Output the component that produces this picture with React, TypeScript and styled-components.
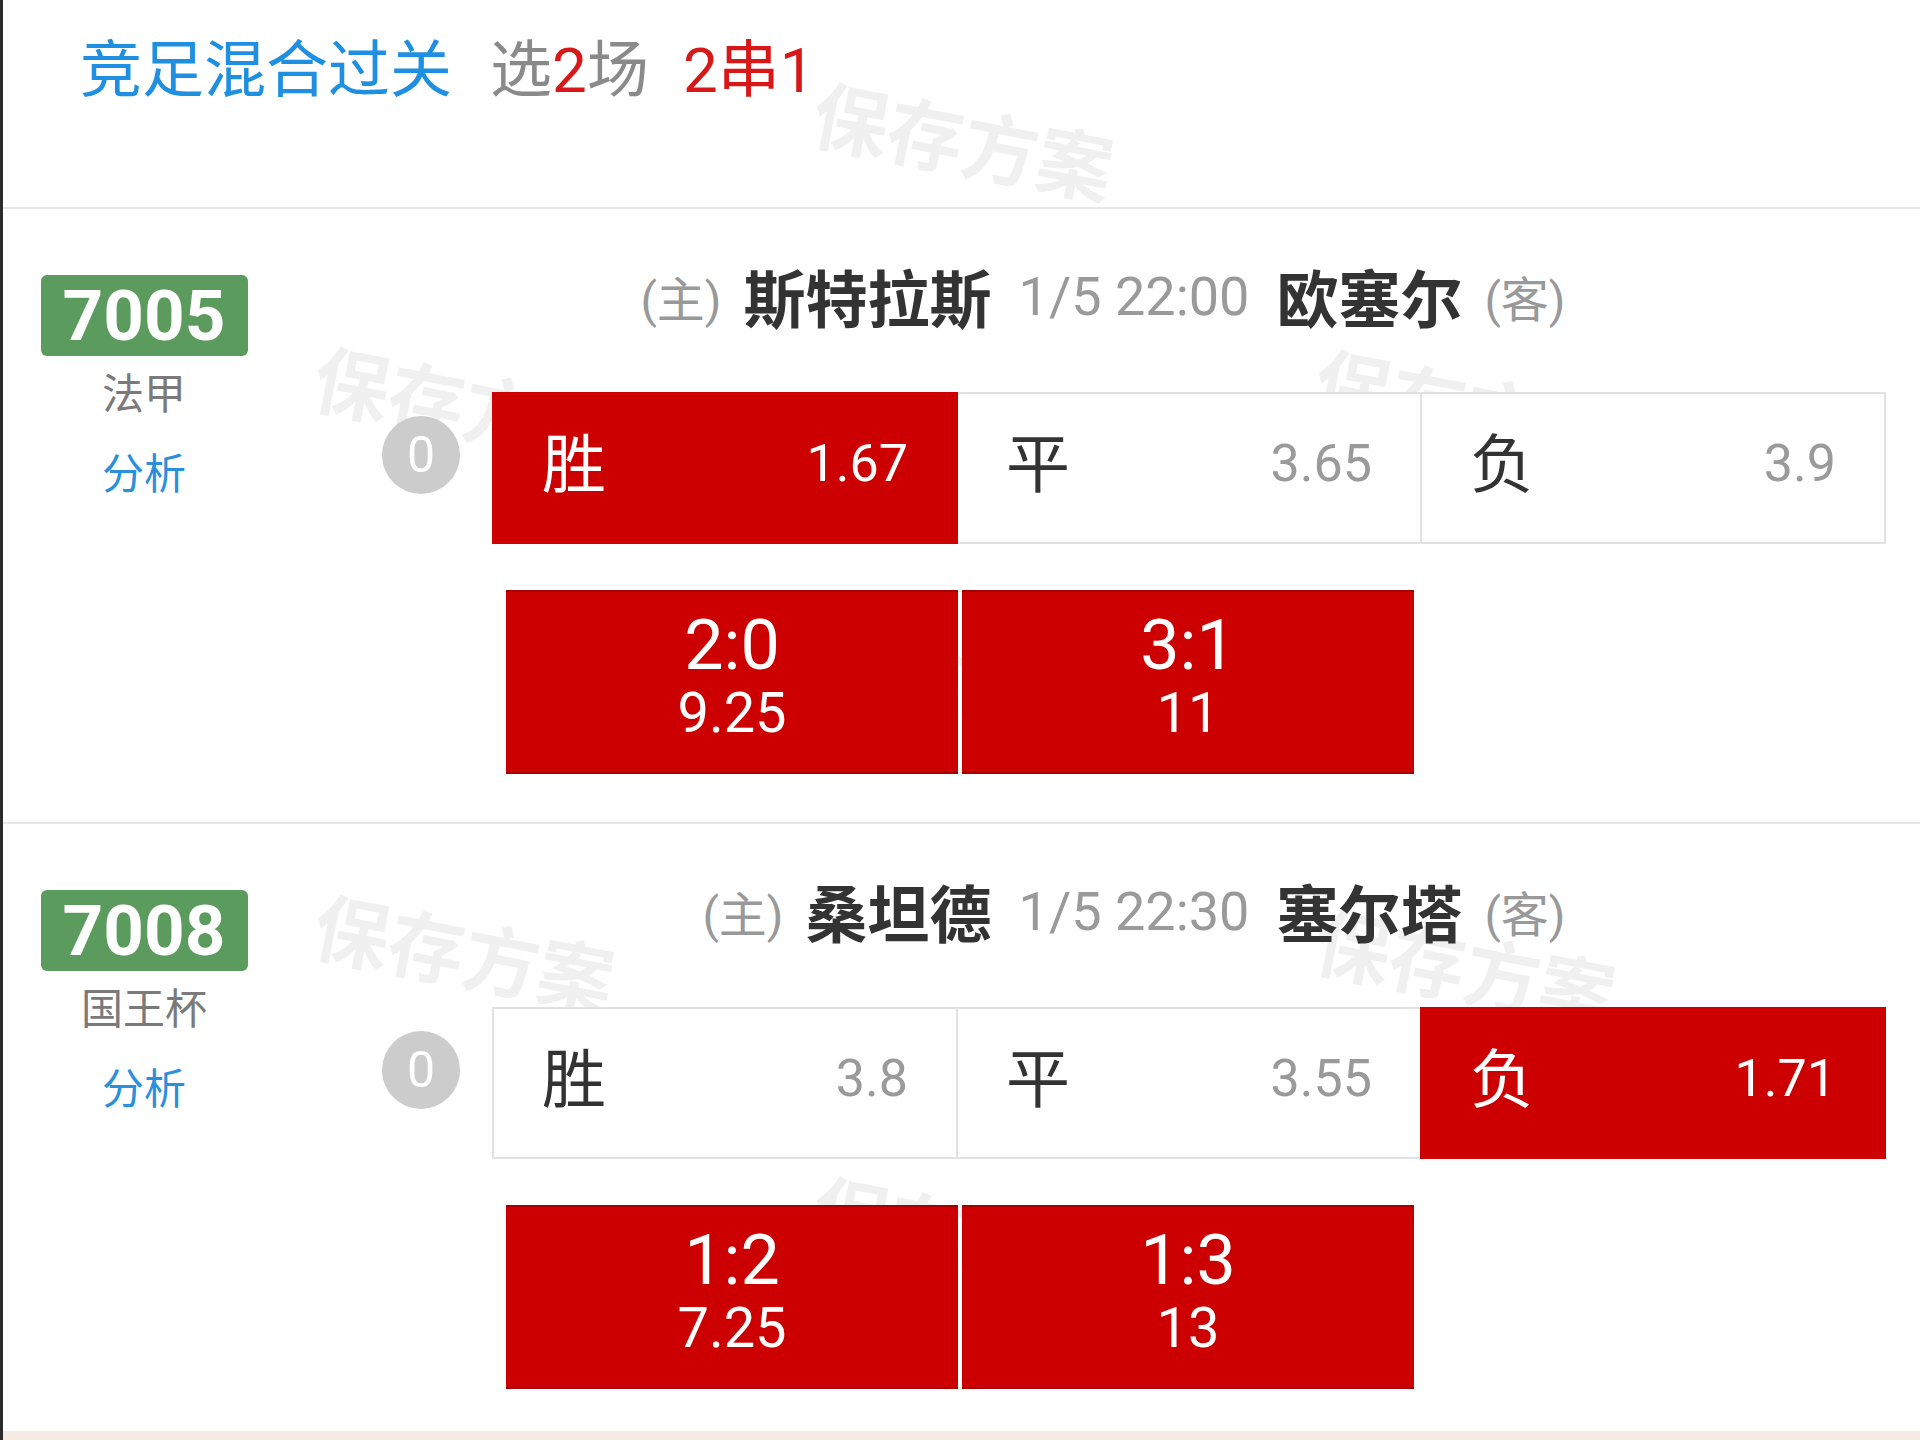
import React from "react";
import styled, { createGlobalStyle } from "styled-components";

const GlobalStyle = createGlobalStyle`
  html, body { margin: 0; padding: 0; background: #ffffff; }
  body { font-family: "Roboto", "Noto Sans CJK SC", "Noto Sans", sans-serif; }
  * { box-sizing: border-box; }
`;

const Page = styled.div`
  position: relative;
  width: 1920px;
  min-height: 1440px;
  display: flex;
  flex-direction: column;
  border-left: 3px solid #2b2b2b;
  background: #ffffff;
  overflow: hidden;
`;

const Watermark = styled.div<{ $x: number; $y: number }>`
  position: absolute;
  left: ${(p) => p.$x}px;
  top: ${(p) => p.$y}px;
  transform: translate(-50%, -50%) rotate(11deg);
  font-size: 76px;
  font-weight: 700;
  color: rgba(0, 0, 0, 0.06);
  white-space: nowrap;
  z-index: 0;
  pointer-events: none;
`;

const Header = styled.header`
  position: relative;
  z-index: 1;
  height: 209px;
  padding: 31px 0 0 77px;
  border-bottom: 2px solid #e8e8e8;
  font-size: 62px;
  line-height: 80px;
  display: flex;
  align-items: flex-start;
`;

const Title = styled.span`
  color: #1e8fe1;
  margin-right: 38px;
`;

const Pick = styled.span`
  color: #8a8a8a;
  margin-right: 34px;
`;

const Red = styled.span`
  color: #d81818;
`;

const Section = styled.section<{ $last?: boolean }>`
  position: relative;
  z-index: 1;
  display: flex;
  height: ${(p) => (p.$last ? 607 : 615)}px;
  border-bottom: ${(p) => (p.$last ? "none" : "2px solid #e8e8e8")};
`;

const Side = styled.div`
  width: 282px;
  padding-top: 66px;
  display: flex;
  flex-direction: column;
  align-items: center;
`;

const Badge = styled.div`
  width: 207px;
  height: 81px;
  border-radius: 6px;
  background: #5b9b5e;
  color: #ffffff;
  font-family: "Roboto", "Liberation Sans", sans-serif;
  font-weight: 700;
  font-size: 71px;
  line-height: 81px;
  text-align: center;
`;

const League = styled.div`
  margin-top: 14px;
  font-size: 42px;
  line-height: 50px;
  color: #7a7a7a;
`;

const Analyze = styled.div`
  margin-top: 30px;
  font-size: 42px;
  line-height: 50px;
  color: #2a8fdc;
`;

const Main = styled.div`
  flex: 1;
  padding-top: 42px;
  padding-right: 34px;
  display: flex;
  flex-direction: column;
`;

const MatchHead = styled.div`
  height: 90px;
  padding-left: 63px;
  margin-right: -34px;
  display: grid;
  grid-template-columns: 1fr auto 1fr;
  align-items: center;
  column-gap: 27px;
  white-space: nowrap;
`;

const Team = styled.div<{ $side: "home" | "away" }>`
  justify-self: ${(p) => (p.$side === "home" ? "end" : "start")};
  display: flex;
  align-items: center;
  gap: 22px;
`;

const Tag = styled.span`
  font-size: 48px;
  color: #999999;
`;

const TeamName = styled.span`
  font-size: 62px;
  font-weight: 700;
  color: #333333;
`;

const Time = styled.span`
  font-size: 54px;
  color: #9a9a9a;
`;

const OddsRow = styled.div`
  margin-top: 51px;
  height: 152px;
  padding-left: 97px;
  display: flex;
  align-items: center;
  gap: 32px;
`;

const Handicap = styled.div`
  width: 78px;
  height: 78px;
  margin-bottom: 26px;
  border-radius: 50%;
  background: #cccccc;
  color: #ffffff;
  font-size: 50px;
  line-height: 78px;
  text-align: center;
  flex-shrink: 0;
`;

const OddsTable = styled.div`
  flex: 1;
  height: 152px;
  display: flex;
`;

const Cell = styled.div<{ $on?: boolean }>`
  position: relative;
  flex: 1;
  height: 100%;
  display: flex;
  align-items: center;
  justify-content: space-between;
  padding: 0 48px 10px;
  background: ${(p) => (p.$on ? "#cc0000" : "#ffffff")};
  border: 2px solid ${(p) => (p.$on ? "#cc0000" : "#e2e2e2")};
  z-index: ${(p) => (p.$on ? 2 : 1)};
  & + & {
    margin-left: -2px;
  }
`;

const CellLabel = styled.span<{ $on?: boolean }>`
  font-size: 64px;
  margin-bottom: 8px;
  color: ${(p) => (p.$on ? "#ffffff" : "#333333")};
`;

const CellOdds = styled.span<{ $on?: boolean }>`
  font-size: 52px;
  color: ${(p) => (p.$on ? "#ffffff" : "#9a9a9a")};
`;

const ScoreRow = styled.div`
  margin-top: 46px;
  padding-left: 221px;
  display: flex;
  gap: 4px;
`;

const ScoreBox = styled.div`
  width: 452px;
  height: 184px;
  background: #cc0000;
  border-top: 2px solid #a80000;
  border-bottom: 2px solid #a80000;
  padding-bottom: 10px;
  display: flex;
  flex-direction: column;
  align-items: center;
  justify-content: center;
  color: #ffffff;
`;

const Score = styled.div`
  font-size: 70px;
  line-height: 72px;
`;

const ScoreOdds = styled.div`
  font-size: 56px;
  line-height: 64px;
`;

const Footer = styled.div`
  flex: 1;
  min-height: 7px;
  background: #f5ebe4;
`;

type Odd = { label: string; value: string; on?: boolean };
type Match = {
  no: string;
  league: string;
  home: string;
  away: string;
  time: string;
  odds: Odd[];
  scores: { score: string; value: string }[];
};

const matches: Match[] = [
  {
    no: "7005",
    league: "法甲",
    home: "斯特拉斯",
    away: "欧塞尔",
    time: "1/5 22:00",
    odds: [
      { label: "胜", value: "1.67", on: true },
      { label: "平", value: "3.65" },
      { label: "负", value: "3.9" },
    ],
    scores: [
      { score: "2:0", value: "9.25" },
      { score: "3:1", value: "11" },
    ],
  },
  {
    no: "7008",
    league: "国王杯",
    home: "桑坦德",
    away: "塞尔塔",
    time: "1/5 22:30",
    odds: [
      { label: "胜", value: "3.8" },
      { label: "平", value: "3.55" },
      { label: "负", value: "1.71", on: true },
    ],
    scores: [
      { score: "1:2", value: "7.25" },
      { score: "1:3", value: "13" },
    ],
  },
];

const marks = [
  { x: 961, y: 138 },
  { x: 462, y: 402 },
  { x: 1463, y: 405 },
  { x: 961, y: 680 },
  { x: 462, y: 950 },
  { x: 1463, y: 965 },
  { x: 961, y: 1232 },
];

export default function App() {
  return (
    <>
      <GlobalStyle />
      <Page>
        {marks.map((m, i) => (
          <Watermark key={i} $x={m.x} $y={m.y}>
            保存方案
          </Watermark>
        ))}
        <Header>
          <Title>竞足混合过关</Title>
          <Pick>
            选<Red>2</Red>场
          </Pick>
          <Red>2串1</Red>
        </Header>
        {matches.map((m, idx) => (
          <Section key={m.no} $last={idx === matches.length - 1}>
            <Side>
              <Badge>{m.no}</Badge>
              <League>{m.league}</League>
              <Analyze>分析</Analyze>
            </Side>
            <Main>
              <MatchHead>
                <Team $side="home">
                  <Tag>(主)</Tag>
                  <TeamName>{m.home}</TeamName>
                </Team>
                <Time>{m.time}</Time>
                <Team $side="away">
                  <TeamName>{m.away}</TeamName>
                  <Tag>(客)</Tag>
                </Team>
              </MatchHead>
              <OddsRow>
                <Handicap>0</Handicap>
                <OddsTable>
                  {m.odds.map((o) => (
                    <Cell key={o.label} $on={o.on}>
                      <CellLabel $on={o.on}>{o.label}</CellLabel>
                      <CellOdds $on={o.on}>{o.value}</CellOdds>
                    </Cell>
                  ))}
                </OddsTable>
              </OddsRow>
              <ScoreRow>
                {m.scores.map((s) => (
                  <ScoreBox key={s.score}>
                    <Score>{s.score}</Score>
                    <ScoreOdds>{s.value}</ScoreOdds>
                  </ScoreBox>
                ))}
              </ScoreRow>
            </Main>
          </Section>
        ))}
        <Footer />
      </Page>
    </>
  );
}
